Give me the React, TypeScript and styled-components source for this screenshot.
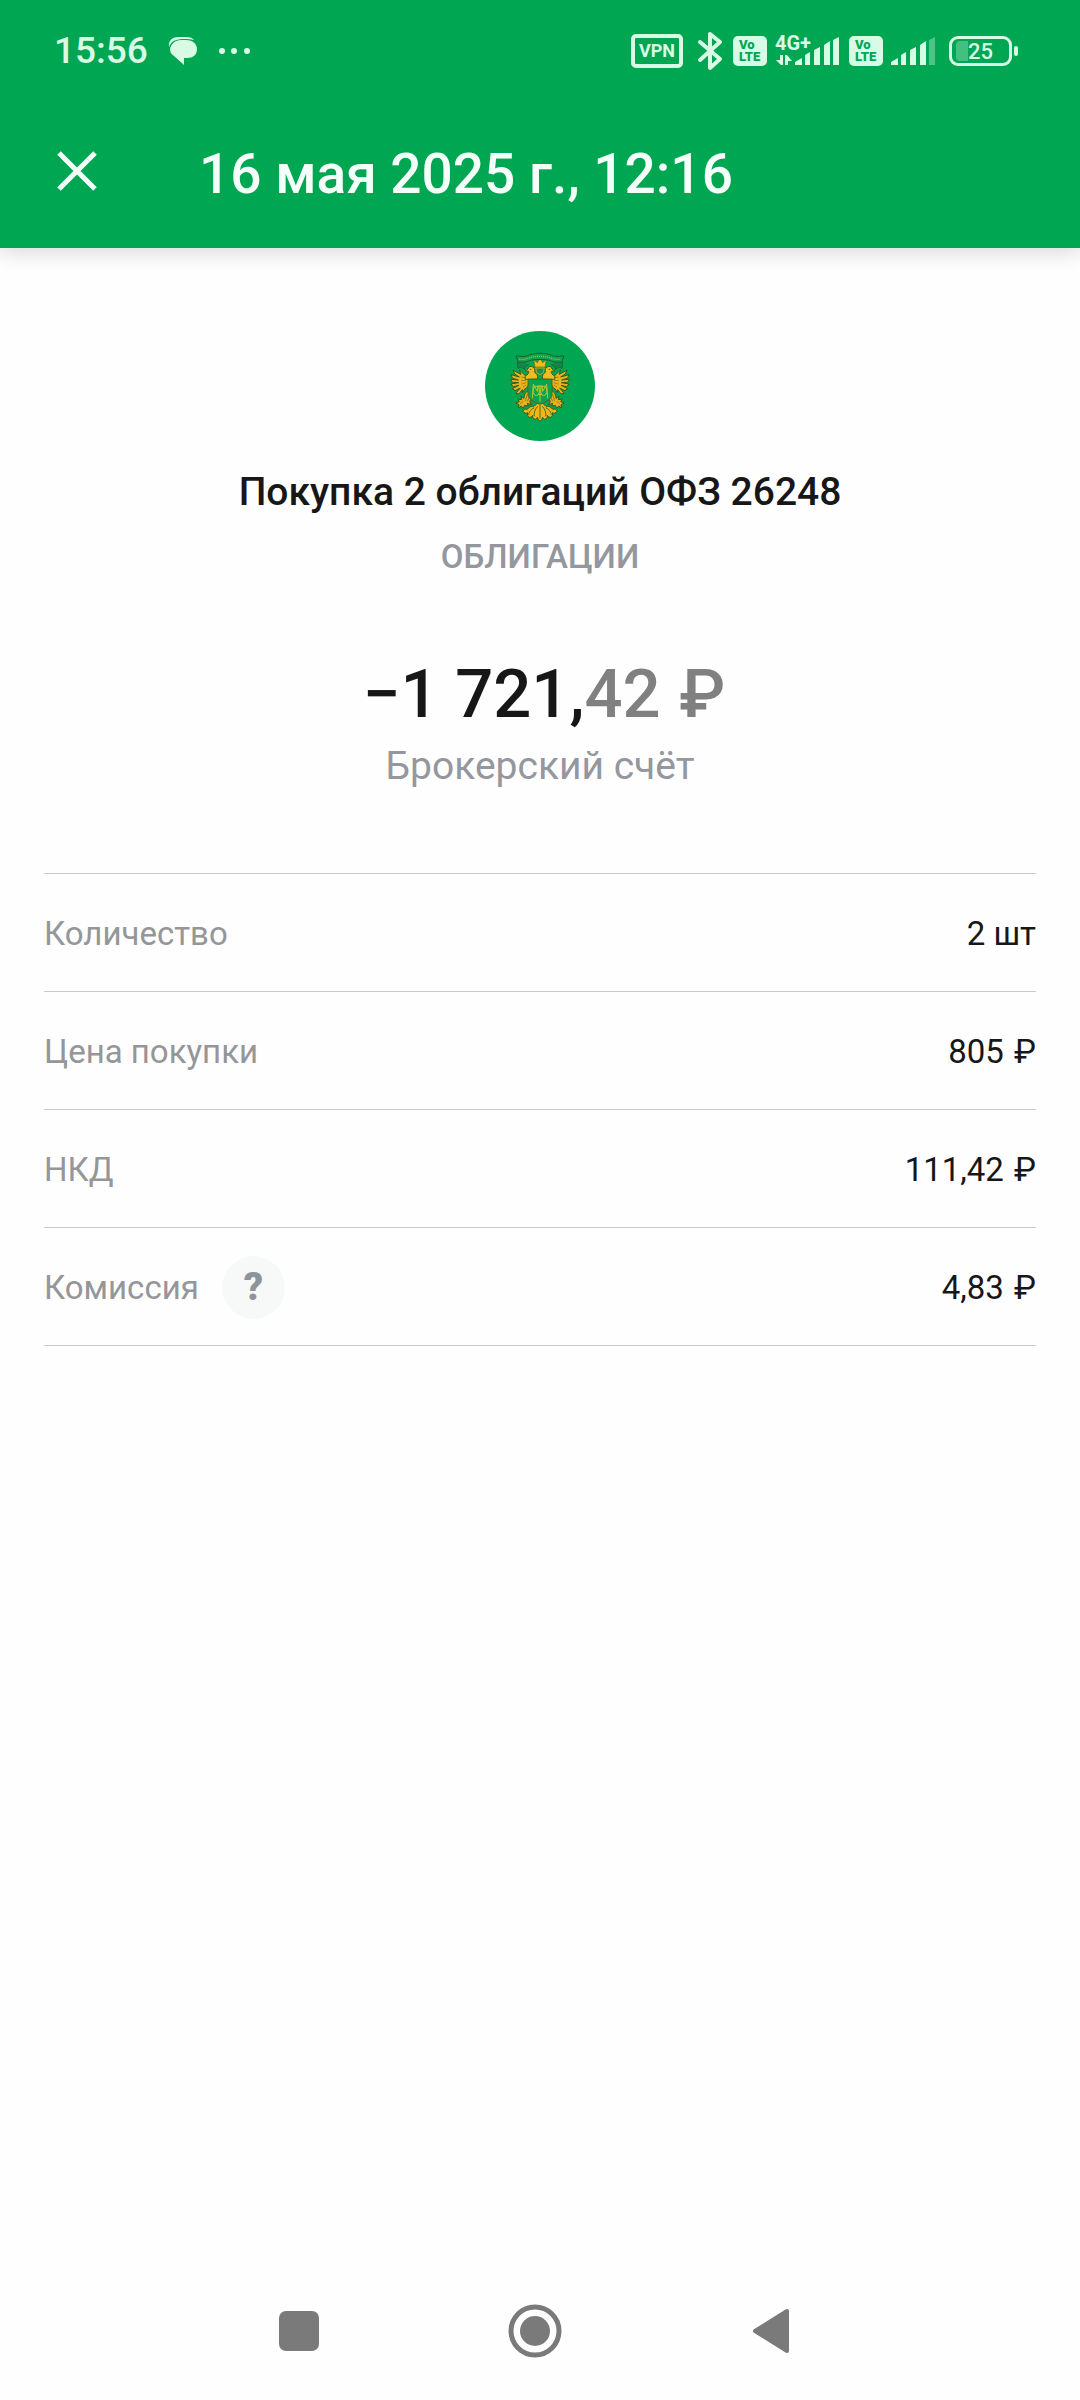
import styled, { createGlobalStyle } from 'styled-components';

const GlobalStyle = createGlobalStyle`
  * {
    box-sizing: border-box;
  }

  body {
    margin: 0;
    background: #fefefe;
    font-family: Roboto, 'Noto Sans', sans-serif;
    color: #171717;
  }
`;

const Screen = styled.div`
  min-height: 100vh;
  display: flex;
  flex-direction: column;
`;

const Header = styled.header`
  background: #01a653;
  color: #f4fff9;
  box-shadow: 0 4px 20px rgba(60, 60, 90, 0.2);
`;

const StatusBar = styled.div`
  height: 102px;
  padding: 0 62px 0 54px;
  display: flex;
  align-items: center;
  justify-content: space-between;
  color: #d8fbe6;
`;

const StatusGroup = styled.div<{ gap: number }>`
  display: flex;
  align-items: center;
  gap: ${props => props.gap}px;
`;

const Clock = styled.time`
  font-size: 37px;
  line-height: 44px;
  font-weight: 500;
`;

const VpnBadge = styled.span`
  width: 52px;
  height: 34px;
  border: 4px solid currentColor;
  border-radius: 5px;
  font-size: 18px;
  line-height: 26px;
  font-weight: 700;
  text-align: center;
`;

const VolteBadge = styled.span`
  width: 34px;
  height: 30px;
  padding-top: 3px;
  padding-left: 6px;
  border-radius: 5px;
  background: #d8fbe6;
  color: #01a653;
  font-size: 13px;
  line-height: 12px;
  font-weight: 900;

  span {
    display: block;
  }
`;

const SignalBox = styled.span`
  position: relative;
  display: flex;
`;

const NetworkType = styled.span`
  position: absolute;
  left: 0;
  top: -4px;
  font-size: 20px;
  line-height: 20px;
  font-weight: 700;
`;

const Battery = styled.span`
  position: relative;
  width: 63px;
  height: 30px;
  margin-right: 6px;
  border: 3px solid currentColor;
  border-radius: 9px;
  font-size: 22px;
  line-height: 26px;
  font-weight: 500;
  text-align: center;

  &::before {
    content: '';
    position: absolute;
    left: 4px;
    top: 2px;
    width: 12px;
    height: 20px;
    border-radius: 4px 0 0 4px;
    background: currentColor;
    opacity: 0.3;
  }

  &::after {
    content: '';
    position: absolute;
    right: -9px;
    top: 7px;
    width: 4px;
    height: 10px;
    border-radius: 2px;
    background: currentColor;
  }
`;

const TitleBar = styled.div`
  height: 146px;
  padding: 37px 45px 0;
  display: flex;
  align-items: flex-start;
  gap: 90px;
`;

const IconButton = styled.button`
  width: 64px;
  height: 64px;
  padding: 0;
  border: 0;
  background: none;
  color: inherit;
  display: flex;
  align-items: center;
  justify-content: center;
`;

const PageTitle = styled.h1`
  margin: 0;
  font-size: 55px;
  line-height: 70px;
  font-weight: 500;
`;

const Content = styled.main`
  flex: 1;
  padding: 83px 44px 0;
`;

const Summary = styled.section`
  display: flex;
  flex-direction: column;
  align-items: center;
`;

const OperationTitle = styled.h2`
  margin: 28px 0 0;
  font-size: 39px;
  line-height: 46px;
  font-weight: 500;
`;

const Category = styled.p`
  margin: 22px 0 0;
  font-size: 33px;
  line-height: 40px;
  font-weight: 500;
  color: #94979d;
`;

const Amount = styled.p`
  margin: 78px 0 0;
  padding-left: 8px;
  font-size: 67px;
  line-height: 78px;
  font-weight: 500;
`;

const Cents = styled.span`
  color: #808080;
`;

const Ruble = styled.span`
  margin-left: 2px;
`;

const Account = styled.p`
  margin: 10px 0 0;
  font-size: 39px;
  line-height: 46px;
  color: #94979d;
`;

const Details = styled.dl`
  margin: 84px 0 0;
  border-top: 1px solid #c9c9cb;
`;

const DetailRow = styled.div`
  height: 118px;
  padding-top: 2px;
  border-bottom: 1px solid #c9c9cb;
  display: flex;
  align-items: center;
  justify-content: space-between;
  font-size: 33px;
  line-height: 40px;
`;

const DetailLabel = styled.dt`
  display: flex;
  align-items: center;
  gap: 23px;
  color: #949699;
`;

const DetailValue = styled.dd`
  margin: 0;
`;

const HelpButton = styled.button`
  width: 63px;
  height: 63px;
  padding: 0;
  border: 0;
  border-radius: 50%;
  background: #f7f9f9;
  color: #8f939c;
  font-family: inherit;
  font-size: 38px;
  line-height: 63px;
  font-weight: 900;
`;

const NavBar = styled.nav`
  height: 138px;
  padding-right: 10px;
  display: flex;
  align-items: center;
  justify-content: center;
  gap: 172px;
  color: #7a7a7a;
`;

const ChatIcon = () => (
  <svg width="30" height="30" viewBox="0 0 30 30" fill="currentColor">
    <path d="M1 11C0 5 4 1 10 1h8c4 0 7 1 8 3-3-1-6-1-10-1C8 3 3 5 1 11Z" />
    <path d="M13 4h5c7 0 11 4 11 9 0 6-4 9-10 9h-3v7L6 20c-3-2-4-4-4-7 1-5 5-9 11-9Z" />
  </svg>
);

const MoreIcon = () => (
  <svg width="34" height="8" viewBox="0 0 34 8" fill="currentColor">
    <circle cx="4" cy="4" r="3" />
    <circle cx="16" cy="4" r="3" />
    <circle cx="29" cy="4" r="3" />
  </svg>
);

const BluetoothIcon = () => (
  <svg width="26" height="40" viewBox="0 0 26 40" fill="none" stroke="currentColor" strokeWidth="4" strokeLinejoin="round" strokeLinecap="round">
    <path d="M3 11 23 28 13 37V3l10 8L3 29" />
  </svg>
);

const SignalBars = ({ weak = false }: { weak?: boolean }) => (
  <>
    <path d="M0 28v-3l7-4v7Z" />
    <path d="M10 28V18l5-3v13Z" />
    <path d="M19 28V13l6-3v18Z" />
    <path d="M29 28V8l6-4v24Z" />
    <path d="M38 28V3l6-3v28Z" opacity={weak ? 0.35 : 1} />
  </>
);

const LteSignal = () => (
  <SignalBox>
    <NetworkType>4G+</NetworkType>
    <svg width="64" height="28" viewBox="0 0 64 28" fill="currentColor">
      <path d="M1 23h4v-5h3v10H6ZM10 28V18h2l5 6h-4v4Z" />
      <g transform="translate(20)">
        <SignalBars />
      </g>
    </svg>
  </SignalBox>
);

const RoamSignal = () => (
  <svg width="44" height="28" viewBox="0 0 44 28" fill="currentColor">
    <SignalBars weak />
  </svg>
);

const Volte = () => (
  <VolteBadge>
    <span>Vo</span>
    <span>LTE</span>
  </VolteBadge>
);

const CloseIcon = () => (
  <svg width="40" height="40" viewBox="0 0 40 40" fill="none" stroke="currentColor" strokeWidth="5">
    <path d="M2 2 38 38M38 2 2 38" />
  </svg>
);

// One side of the eagle, the other is its mirror
const EagleHalf = () => (
  <g>
    <path
      d="M207 196C199 198 193 195 188 188L178 179L183 192L159 180L164 191L178 200L153 193L157 203L175 209L151 207L157 216L176 217L153 221L160 229L177 225L157 235L165 241L181 233L167 250L177 250L187 238L188 248L194 236L202 231L212 210Z"
      fill="#eab51c"
      stroke="#3d5a1b"
      strokeWidth="3"
      strokeLinejoin="round"
    />
    <path
      d="M232 206C235 196 230 189 224 186C226 177 222 169 214 168C208 168 204 171 204 176L195 182L206 183C208 188 203 193 195 198L196 207Z"
      fill="#f0bd20"
      stroke="#3d5a1b"
      strokeWidth="3"
    />
    <circle cx="212" cy="177" r="2" fill="#3d5a1b" />
    <path
      d="M198 203 184 200M198 210 184 211M199 217 185 221M199 224 189 230"
      stroke="#7a6a18"
      strokeWidth="2"
      fill="none"
    />
    <path
      d="M202 243C195 247 192 254 192 264L183 258L185 268L173 266L178 274L167 278L177 283L175 293L184 287L190 294L194 285L204 288L202 279L214 284L209 273C214 268 215 260 213 253Z"
      fill="#e6b11d"
      stroke="#3d5a1b"
      strokeWidth="3"
      strokeLinejoin="round"
    />
    <path d="M202 252 196 271M209 258 202 273M188 273 181 281" stroke="#5b691a" strokeWidth="2" fill="none" />
  </g>
);

const Emblem = () => (
  <svg width="110" height="110" viewBox="75 62 330 330" role="img" aria-label="ОФЗ">
    <circle cx="240" cy="227" r="165" fill="#01a653" />
    <EagleHalf />
    <g transform="translate(480) scale(-1 1)">
      <EagleHalf />
    </g>
    <path
      d="M240 277C231 278 227 283 222 288C213 286 206 291 202 297C195 295 190 298 189 303C193 309 199 310 203 307C201 313 203 319 208 321C213 321 216 318 218 315C217 321 220 326 225 327C228 327 230 324 232 321C234 327 237 331 240 333C243 331 246 327 248 321C250 324 252 327 255 327C260 326 263 321 262 315C264 318 267 321 272 321C277 319 279 313 277 307C281 310 287 309 291 303C290 298 285 295 278 297C274 291 267 286 258 288C253 283 249 278 240 277Z"
      fill="#eeb81c"
      stroke="#3d5a1b"
      strokeWidth="3"
    />
    <path d="M240 284v41M233 288C225 297 221 307 223 318M247 288C255 297 259 307 257 318M223 292C213 297 207 304 206 314M257 292C267 297 273 304 274 314" fill="none" stroke="#57691b" strokeWidth="3" />
    <path d="M204 207h72v44c0 15-16 24-36 31-20-7-36-16-36-31Z" fill="#08a450" stroke="#665f18" strokeWidth="3" />
    <path
      d="m217 264 3-42 12 21 2-18m29 39-3-42-12 21-2-18M229 228c-13 2-13 26 0 28 11 0 13-28 0-28Zm22 0c13 2 13 26 0 28-11 0-13-28 0-28ZM240 224v50m-10-46h20m-17 24h14"
      fill="none"
      stroke="#c5c52f"
      strokeWidth="3"
    />
    <path d="m225 170-4-22 11 9 8-14 8 14 11-9-4 22Z" fill="#f0bd18" stroke="#6b6a19" strokeWidth="2" />
    <path d="M227 173h26l-3 14-10 6-10-6Z" fill="#15944b" stroke="#c7a521" strokeWidth="3" />
    <path
      d="m180 150-8 7 2 17 10-4 9 7 3-9 11-5m93-13 8 7-2 17-10-4-9 7-3-9-11-5"
      fill="#16854a"
      stroke="#126b3c"
      strokeWidth="3"
    />
    <path d="M168 137c13-1 23 4 35-1 10-5 18-7 37-7s27 2 37 7c12 5 22 0 35 1l-7 18c-14 2-25 0-34-4-13-5-49-5-62 0-9 4-20 6-34 4Z" fill="#16a050" stroke="#145f38" strokeWidth="3" />
    <path d="M178 147c13 1 22-1 32-5 13-5 47-5 60 0 10 4 19 6 32 5" fill="none" stroke="#9cc33c" strokeWidth="4" strokeDasharray="3 3" />
  </svg>
);

const RecentsIcon = () => (
  <svg width="40" height="40" viewBox="0 0 40 40" fill="currentColor">
    <rect width="40" height="40" rx="7" />
  </svg>
);

const HomeIcon = () => (
  <svg width="54" height="54" viewBox="0 0 54 54">
    <circle cx="27" cy="27" r="24" fill="none" stroke="currentColor" strokeWidth="5" />
    <circle cx="27" cy="27" r="15" fill="currentColor" />
  </svg>
);

const BackIcon = () => (
  <svg width="38" height="46" viewBox="0 0 38 46" fill="currentColor" stroke="currentColor" strokeWidth="4" strokeLinejoin="round">
    <path d="M3 23 35 3v40Z" />
  </svg>
);

interface Detail {
  label: string;
  value: string;
  currency?: boolean;
  help?: boolean;
}

const details: Detail[] = [
  { label: 'Количество', value: '2 шт' },
  { label: 'Цена покупки', value: '805', currency: true },
  { label: 'НКД', value: '111,42', currency: true },
  { label: 'Комиссия', value: '4,83', currency: true, help: true }
];

export default function App() {
  return (
    <Screen>
      <GlobalStyle />
      <Header>
        <StatusBar>
          <StatusGroup gap={20}>
            <Clock>15:56</Clock>
            <ChatIcon />
            <MoreIcon />
          </StatusGroup>
          <StatusGroup gap={14}>
            <StatusGroup gap={10}>
              <StatusGroup gap={14}>
                <VpnBadge>VPN</VpnBadge>
                <BluetoothIcon />
              </StatusGroup>
              <StatusGroup gap={8}>
                <Volte />
                <LteSignal />
              </StatusGroup>
              <StatusGroup gap={8}>
                <Volte />
                <RoamSignal />
              </StatusGroup>
            </StatusGroup>
            <Battery>25</Battery>
          </StatusGroup>
        </StatusBar>
        <TitleBar>
          <IconButton type="button" aria-label="Закрыть">
            <CloseIcon />
          </IconButton>
          <PageTitle>16 мая 2025 г., 12:16</PageTitle>
        </TitleBar>
      </Header>

      <Content>
        <Summary>
          <Emblem />
          <OperationTitle>Покупка 2 облигаций ОФЗ 26248</OperationTitle>
          <Category>ОБЛИГАЦИИ</Category>
          <Amount>
            −1 721,
            <Cents>
              42 <Ruble>₽</Ruble>
            </Cents>
          </Amount>
          <Account>Брокерский счёт</Account>
        </Summary>

        <Details>
          {details.map(({ label, value, currency, help }) => (
            <DetailRow key={label}>
              <DetailLabel>
                {label}
                {help && (
                  <HelpButton type="button" aria-label="Что такое комиссия">
                    ?
                  </HelpButton>
                )}
              </DetailLabel>
              <DetailValue>
                {value}
                {currency && <> <Ruble>₽</Ruble></>}
              </DetailValue>
            </DetailRow>
          ))}
        </Details>
      </Content>

      <NavBar>
        <IconButton type="button" aria-label="Недавние">
          <RecentsIcon />
        </IconButton>
        <IconButton type="button" aria-label="Домой">
          <HomeIcon />
        </IconButton>
        <IconButton type="button" aria-label="Назад">
          <BackIcon />
        </IconButton>
      </NavBar>
    </Screen>
  );
}
